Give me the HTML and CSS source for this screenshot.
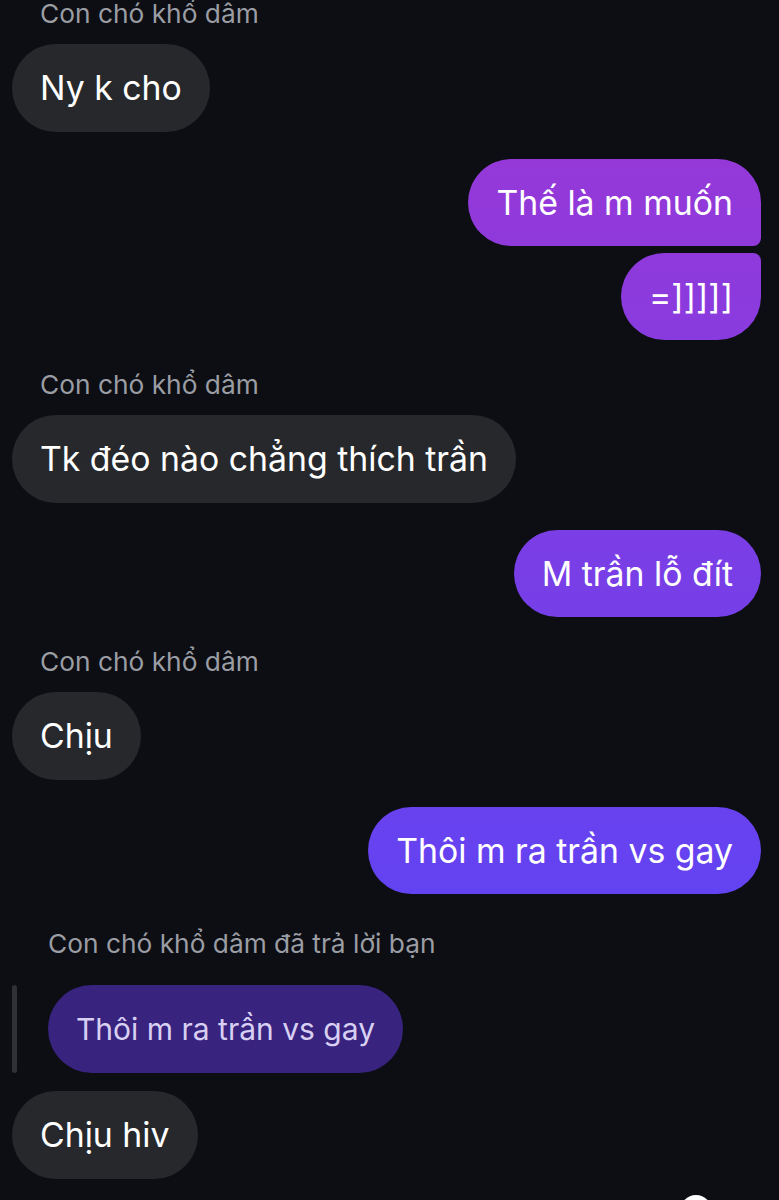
FILE: index.html
```html
<!DOCTYPE html>
<html lang="vi">
<head>
    <meta charset="UTF-8">
    <meta name="viewport" content="width=device-width, initial-scale=1.0">
    <title>Tin nhắn</title>
    <link rel="stylesheet" href="styles.css">
</head>
<body>
    <main class="chat">

        <p class="sender">Con chó khổ dâm</p>
        <div class="row in"><span class="bubble">Ny k cho</span></div>

        <div class="row out first"><span class="bubble top">Thế là m muốn</span></div>
        <div class="row out next"><span class="bubble bottom">=]]]]]</span></div>

        <p class="sender">Con chó khổ dâm</p>
        <div class="row in"><span class="bubble">Tk đéo nào chẳng thích trần</span></div>

        <div class="row out first"><span class="bubble">M trần lỗ đít</span></div>

        <p class="sender">Con chó khổ dâm</p>
        <div class="row in"><span class="bubble">Chịu</span></div>

        <div class="row out first"><span class="bubble">Thôi m ra trần vs gay</span></div>

        <p class="sender reply-label">Con chó khổ dâm đã trả lời bạn</p>
        <div class="quote">
            <span class="quote-bar"></span>
            <span class="bubble quoted">Thôi m ra trần vs gay</span>
        </div>
        <div class="row in last"><span class="bubble">Chịu hiv</span></div>

        <span class="seen"></span>
    </main>
</body>
</html>
```

FILE: styles.css
```css
* {
    box-sizing: border-box;
    margin: 0;
    padding: 0;
}

body {
    width: 779px;
    height: 1200px;
    overflow: hidden;
    background-color: #0c0e13;
    font-family: Inter, 'Noto Sans', sans-serif;
    color: white;
}

.chat {
    position: relative;
    height: 1200px;
    padding: 0 18px 0 12px;
    display: flex;
    flex-direction: column;
}

.sender {
    margin-top: 30px;
    padding-left: 28px;
    height: 30px;
    line-height: 30px;
    font-size: 26.3px;
    color: #9b9da4;
}

.chat .sender:first-child {
    margin-top: -1px;
}

.row {
    display: flex;
}

.in {
    margin-top: 15px;
}

.out {
    justify-content: flex-end;
}

.out.first {
    margin-top: 27px;
}

.out.next {
    margin-top: 7px;
}

.bubble {
    display: inline-block;
    height: 88px;
    line-height: 88px;
    padding: 0 28px;
    border-radius: 44px;
    font-size: 33.8px;
    white-space: nowrap;
    background-color: #26282c;
}

.out .bubble {
    height: 87px;
    line-height: 87px;
    background: linear-gradient(to bottom, #a036d3 0, #4e47fc 1200px);
    background-attachment: fixed;
}

.out .bubble.top {
    border-bottom-right-radius: 8px;
}

.out .bubble.bottom {
    border-top-right-radius: 8px;
}

.reply-label {
    margin-top: 35px;
    padding-left: 36px;
}

.quote {
    display: flex;
    align-items: center;
    gap: 31px;
    margin-top: 26px;
}

.quote-bar {
    width: 5px;
    height: 88px;
    border-radius: 3px;
    background-color: #2f3136;
}

.quoted {
    font-size: 30px;
    padding: 0 28px;
    background-color: #38237f;
    color: #d8d0f2;
}

.in.last {
    margin-top: 18px;
}

.seen {
    position: absolute;
    left: 680px;
    top: 1195px;
    width: 32px;
    height: 32px;
    border-radius: 50%;
    background-color: white;
}
```
